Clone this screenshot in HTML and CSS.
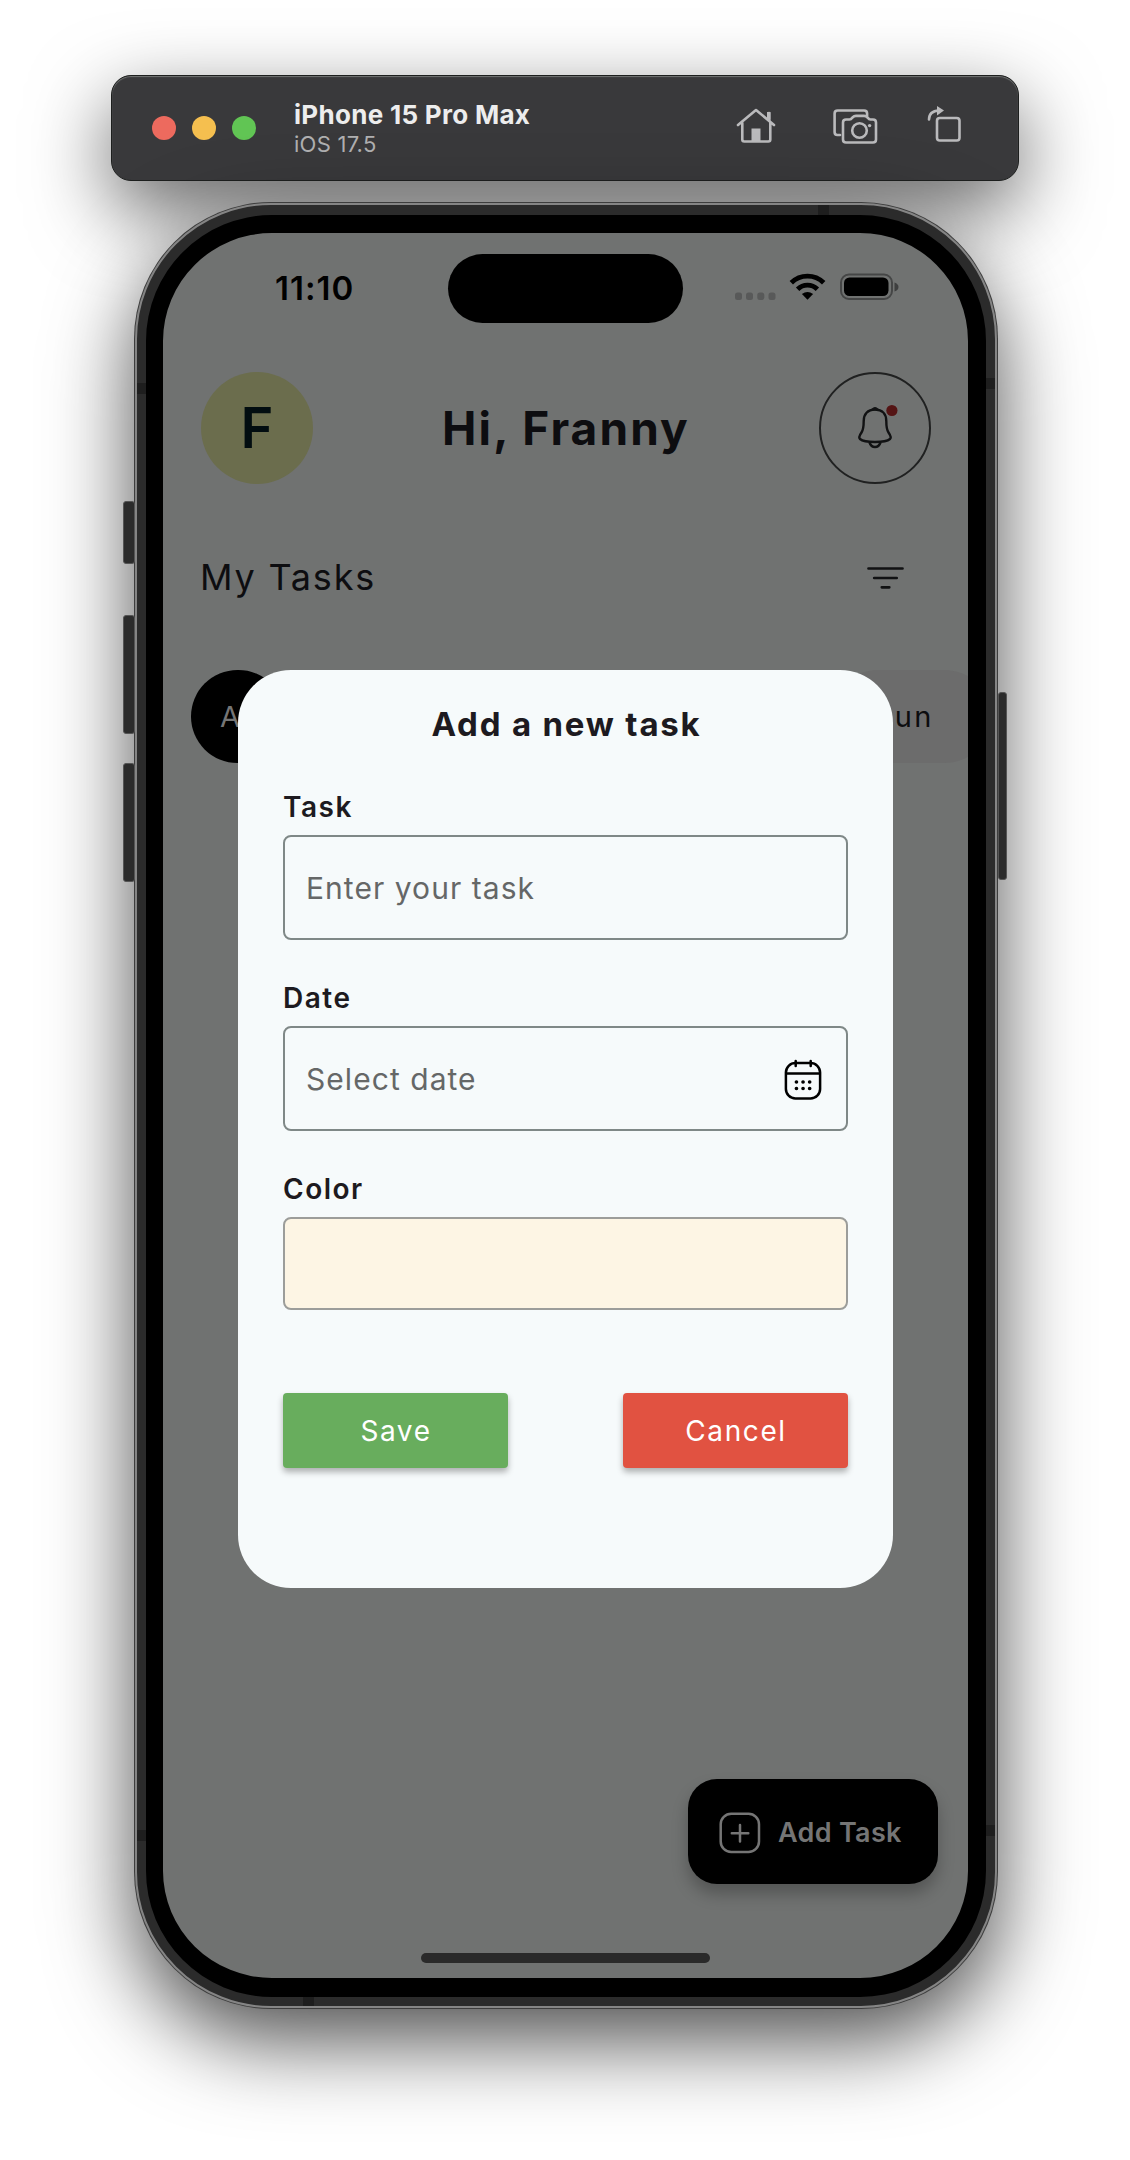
FILE: index.html
```html
<!DOCTYPE html>
<html lang="en">
<head>
<meta charset="utf-8">
<title>Tasks</title>
<link rel="stylesheet" href="styles.css">
</head>
<body>
<header class="toolbar">
  <div class="lights"><i class="light red"></i><i class="light yellow"></i><i class="light green"></i></div>
  <div class="device"><strong class="device-name">iPhone 15 Pro Max</strong><span class="device-os">iOS 17.5</span></div>
  <svg class="tools" width="230" height="44" viewBox="0 0 230 44" fill="none" stroke="#bababc" stroke-width="2.6" stroke-linecap="round" stroke-linejoin="round">
    <path d="M2 19 20 4l18 15M6.300 17v16.500q0 2 2 2h24q2 0 2-2V17M33 13V7"/>
    <path d="M31 6h3.600v9L31 12zM15.500 22.500h9V35h-9z" fill="#bababc" stroke="none"/>
    <path d="M104 29h-2.700q-2.700 0-2.700-3V7.500q0-3 3-3h26.500q3 0 3 3v2.500M110 13.500h3.500q1.500 0 3-2 1.500-1.600 3.500-1.600h8q2 0 3.500 1.600 1.500 2 3 2h2.500q3 0 3 3v17q0 3-3 3H110q-3 0-3-3v-17q0-3 3-3z"/>
    <circle cx="123.500" cy="24.500" r="7.300"/><circle cx="133.600" cy="19.600" r="1.700" fill="#bababc" stroke="none"/>
    <path d="M193 13.500q0-8.500 10-9"/><path d="M201 0v9.500l7-5z" fill="#bababc" stroke="none"/>
    <rect x="201" y="12" width="22.500" height="22.500" rx="2.800"/>
  </svg>
</header>
<main class="phone">
  <i class="key key-action"></i><i class="key key-up"></i><i class="key key-down"></i><i class="key key-power"></i>
  <i class="band band-top"></i><i class="band band-l1"></i><i class="band band-r1"></i><i class="band band-l2"></i><i class="band band-r2"></i><i class="band band-bottom"></i>
  <div class="screen">
    <div class="status">
      <span class="time">11:10</span>
      <i class="island"></i>
      <svg class="signals" width="164" height="28" viewBox="0 0 164 28">
        <g fill="#585959"><rect x="0" y="19.500" width="7" height="7.500" rx="2.500"/><rect x="11" y="19.500" width="7" height="7.500" rx="2.500"/><rect x="22.300" y="19.500" width="7" height="7.500" rx="2.500"/><rect x="33.500" y="19.500" width="7" height="7.500" rx="2.500"/></g>
        <g fill="none" stroke="#000" stroke-width="4.800"><path d="M56.300 9.800a23 23 0 0 1 32.400 0"/><path d="M62.600 16.200a14 14 0 0 1 19.800 0"/></g>
        <path d="M66.900 21q5.600-4.200 11.200 0l-5.600 5.800z"/>
        <rect x="106" y="1.500" width="51" height="24.500" rx="8" fill="none" stroke="#454646" stroke-width="2"/>
        <rect x="109" y="4.500" width="44.500" height="18.500" rx="5.500"/>
        <path d="M159.500 9.500q4 1.500 4 4.500t-4 4.500z" fill="#3e3f3f"/>
      </svg>
    </div>
    <div class="greeting">
      <span class="avatar">F</span>
      <h1 class="hello">Hi, Franny</h1>
      <span class="bell">
        <svg class="bell-icon" width="40" height="48" viewBox="0 0 40 48" fill="none" stroke="#111213" stroke-width="2.400" stroke-linejoin="round">
          <path d="M20 5.500c-7.500 0-11.300 5-11.300 11.500 0 6-.2 8.500-2.200 11.500-1.800 2.600-3.200 5-1.500 6.500 2.600 2.200 9 3 15 3s12.400-.8 15-3c1.700-1.500.3-3.900-1.500-6.500-2-3-2.200-5.500-2.200-11.500C31.300 10.500 27.500 5.500 20 5.500z"/>
          <path d="M14.500 38.500q1.500 4.500 5.500 4.500t5.500-4.500"/>
          <path d="M15.500 6.500Q17.500 3 20 3t4.500 3.500z" fill="#111213" stroke="none"/>
          <circle cx="36.900" cy="6.500" r="5.600" fill="#541414" stroke="none"/>
        </svg>
      </span>
    </div>
    <div class="section">
      <h2 class="section-title">My Tasks</h2>
      <svg width="38" height="24" viewBox="0 0 38 24" fill="none" stroke="#111213" stroke-width="2.700" stroke-linecap="round"><path d="M1.500 2.500h34M7.200 12h22.500M14.800 21.300h7.500"/></svg>
    </div>
    <div class="days"><span class="day day-on">All</span><span class="day day-off">Sun</span></div>
    <div class="fab">
      <svg width="42" height="42" viewBox="0 0 42 42" fill="none" stroke="#757575" stroke-width="2.500" stroke-linecap="round"><rect x="1.700" y="1.700" width="38.300" height="38.300" rx="10.500"/><path d="M21 13v16.500M12.800 21.200h16.500"/></svg>
      <span class="fab-text">Add Task</span>
    </div>
    <i class="home-bar"></i>
    <form class="dialog">
      <h2 class="dialog-title">Add a new task</h2>
      <div class="label">Task</div>
      <div class="field"><span>Enter your task</span></div>
      <div class="label">Date</div>
      <div class="field"><span>Select date</span>
        <svg width="40" height="44" viewBox="0 0 40 44" fill="none" stroke="#000" stroke-width="2.500" stroke-linecap="round"><rect x="2.900" y="6" width="34.200" height="35.500" rx="9.500"/><path d="M3.500 16.500h33M12.700 4v5M27.700 4v5"/><path d="M13.400 25h.1M20 25h.1M26.600 25h.1M13.400 31.500h.1M20 31.500h.1M26.600 31.500h.1" stroke-width="3.600"/></svg>
      </div>
      <div class="label">Color</div>
      <div class="swatch"></div>
      <div class="actions"><button class="btn save" type="button">Save</button><button class="btn cancel" type="button">Cancel</button></div>
    </form>
  </div>
</main>
</body>
</html>
```
FILE: styles.css
```css
* { box-sizing: border-box; }
body {
  margin: 0;
  width: 1130px;
  height: 2160px;
  padding-top: 75px;
  overflow: hidden;
  background: #fff;
  font-family: Inter, "Liberation Sans", sans-serif;
}
h1, h2 { margin: 0; }
i { display: block; }
svg { display: block; flex: none; }

.toolbar {
  display: flex;
  align-items: center;
  width: 908px;
  height: 106px;
  margin: 0 auto;
  padding-left: 40px;
  border-radius: 20px;
  background: #39393b;
  border: 1px solid #1d1f1e;
  box-shadow: inset 0 1px 1px #747675, 0 28px 80px rgba(0, 0, 0, .6);
}
.lights { display: flex; gap: 16px; }
.light { width: 24px; height: 24px; border-radius: 50%; }
.red { background: #ed6a5e; }
.yellow { background: #f5bf4f; }
.green { background: #61c554; }
.device { display: flex; flex-direction: column; width: 442px; margin-left: 38px; white-space: nowrap; }
.device-name { font-size: 26px; line-height: 31px; font-weight: 700; letter-spacing: .3px; color: #ededed; }
.device-os { font-size: 22px; line-height: 28px; letter-spacing: .25px; color: #b0b0b1; }

.phone {
  position: relative;
  width: 862px;
  height: 1805px;
  margin: 22px 0 0 135px;
  padding: 10px 9px;
  border: 2px solid #858585;
  border-radius: 136px;
  background: #2b2b2b;
  box-shadow: 0 0 0 1px #3d3d3d, 0 32px 85px rgba(0, 0, 0, .7);
}
.key { position: absolute; background: #2b2b2b; border: 1px solid #555; border-radius: 3px; }
.key-action { left: -14px; top: 296px; width: 12px; height: 63px; }
.key-up { left: -14px; top: 410px; width: 12px; height: 119px; }
.key-down { left: -14px; top: 558px; width: 12px; height: 119px; }
.key-power { left: 861px; top: 487px; width: 9px; height: 188px; }
.band { position: absolute; width: 9px; height: 11px; background: #1e1e1e; }
.band-top { left: 681px; top: 0; width: 11px; height: 10px; }
.band-l1 { left: 0; top: 178px; }
.band-r1 { right: 0; top: 173px; }
.band-l2 { left: 0; top: 1625px; }
.band-r2 { right: 0; top: 1620px; }
.band-bottom { left: 166px; bottom: 0; width: 11px; height: 9px; }

.screen {
  position: relative;
  width: 840px;
  height: 1782px;
  border: solid #000;
  border-width: 18px 18px 19px 17px;
  border-radius: 126px;
  background: #707271;
  overflow: hidden;
  color: #0d0d10;
}
.status { display: flex; align-items: center; height: 69px; margin-top: 21px; }
.time { width: 173px; margin: -1px 0 0 112px; font-size: 33px; font-weight: 600; letter-spacing: 1px; color: #000; }
.island { width: 235px; height: 69px; border-radius: 35px; background: #000; }
.signals { margin: -3px 0 0 52px; }

.greeting { display: flex; align-items: center; justify-content: space-between; height: 112px; margin: 49px 37px 0 38px; }
.avatar, .bell { display: grid; place-items: center; width: 112px; height: 112px; border-radius: 50%; }
.avatar { background: #6b6d4d; color: #020d10; font-size: 56px; font-weight: 600; }
.bell { border: 2px solid #202121; }
.bell-icon { overflow: visible; }
.hello { font-size: 46px; font-weight: 700; letter-spacing: 2.1px; }
.section { display: flex; align-items: center; justify-content: space-between; height: 50px; margin: 69px 63px 0 37px; }
.section-title { margin-top: -2px; font-size: 36px; font-weight: 400; letter-spacing: 1.8px; }
.days { display: flex; justify-content: space-between; height: 93px; margin: 67px -23px 0 28px; }
.day { height: 93px; line-height: 93px; border-radius: 47px; font-size: 29px; }
.day-on { width: 94px; padding-left: 29px; background: #000; color: #757575; }
.day-off { width: 160px; padding-left: 43px; background: #6c6c6c; color: #0c0d0f; letter-spacing: 2.2px; }

.fab {
  position: absolute;
  right: 30px;
  bottom: 94px;
  display: flex;
  align-items: center;
  width: 250px;
  height: 105px;
  padding: 2px 0 0 31px;
  border-radius: 29px;
  background: #000;
  box-shadow: 0 10px 16px rgba(0, 0, 0, .25);
}
.fab-text { margin-left: 17px; font-size: 27px; font-weight: 600; letter-spacing: .3px; color: #757575; }
.home-bar { position: absolute; left: 258px; bottom: 15px; width: 289px; height: 10px; border-radius: 5px; background: #2a2a2a; }

.dialog {
  position: absolute;
  left: 75px;
  top: 437px;
  width: 655px;
  height: 918px;
  padding: 0 45px;
  border-radius: 53px;
  background: #f6fafb;
  color: #1d1a20;
}
.dialog-title { margin-top: 29px; height: 50px; line-height: 50px; text-align: center; text-indent: 2px; font-size: 33px; font-weight: 700; letter-spacing: 1.8px; }
.label { height: 40px; line-height: 40px; margin: 38px 0 8px; font-size: 28px; font-weight: 600; letter-spacing: 1.5px; }
.field { display: flex; align-items: center; justify-content: space-between; height: 105px; padding: 0 23px 0 21px; border: 2px solid #7f8887; border-radius: 8px; font-size: 30px; letter-spacing: 1.05px; color: #656767; }
.swatch { height: 93px; border: 2px solid #9c9d9a; border-radius: 8px; background: #fdf5e4; }
.actions { display: flex; justify-content: space-between; margin-top: 83px; }
.btn { width: 225px; height: 75px; padding: 0; border: 0; border-radius: 4px; font: 400 28px Inter, sans-serif; letter-spacing: 1.6px; text-indent: 1px; color: #fff; box-shadow: 0 4px 6px rgba(0, 0, 0, .3); }
.save { background: #68ad5d; }
.cancel { background: #e15241; }
```
